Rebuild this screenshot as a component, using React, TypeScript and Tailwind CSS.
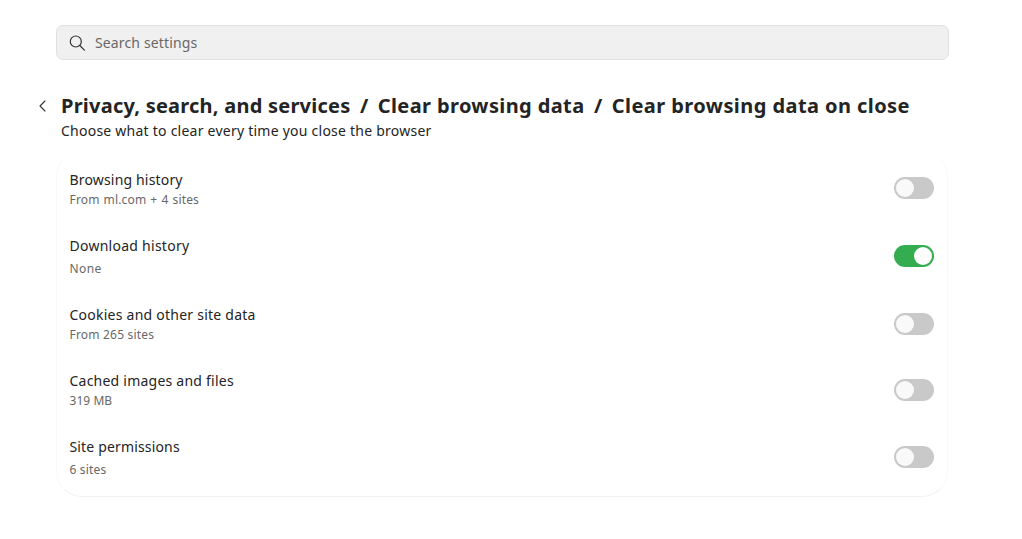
const crumbs = [
  { text: 'Privacy, search, and services', spacing: 'tracking-[0.23px]' },
  { text: 'Clear browsing data', spacing: 'tracking-[0.39px]' },
  { text: 'Clear browsing data on close', spacing: 'tracking-[0.43px]' },
];

const rows = [
  { title: 'Browsing history', titleSpacing: 'tracking-[0.17px]', detail: 'From ml.com + 4 sites', detailSpacing: 'tracking-[0.15px] [word-spacing:0.8px]', on: false, box: 'h-[66px]', gap: 'mt-0', toggle: 'mt-[7px]' },
  { title: 'Download history', titleSpacing: 'tracking-[0.26px]', detail: 'None', detailSpacing: 'tracking-[0.4px]', on: true, box: 'h-[69px]', gap: 'mt-[3px]', toggle: 'mt-[9px]' },
  { title: 'Cookies and other site data', titleSpacing: 'tracking-[0.24px]', detail: 'From 265 sites', detailSpacing: 'tracking-[0.2px]', on: false, box: 'h-[66px]', gap: 'mt-0', toggle: 'mt-[8px]' },
  { title: 'Cached images and files', titleSpacing: 'tracking-[0.23px]', detail: '319 MB', detailSpacing: 'tracking-[0.05px]', on: false, box: 'h-[66px]', gap: 'mt-0', toggle: 'mt-[8px]' },
  { title: 'Site permissions', titleSpacing: 'tracking-[0.16px]', detail: '6 sites', detailSpacing: 'tracking-[0.18px]', on: false, box: 'h-[60px]', gap: 'mt-[3px]', toggle: 'mt-[9px]' },
];

export default function App() {
  return (
    <main className="h-[539px] w-[1022px] overflow-hidden bg-white font-['Noto_Sans',sans-serif] text-[#242424]">
      <div className="ml-[56px] mt-[25px] flex h-[35px] w-[893px] items-center rounded-[7px] border border-[#e1e1e1] bg-[#f0f0f0] pl-[11px]">
        <svg width="18" height="18" viewBox="0 0 18 18" fill="none" stroke="#333333" strokeWidth="1.2" strokeLinecap="round">
          <circle cx="7.8" cy="7.5" r="5.5" />
          <path d="M11.8 11.5L16.4 16.1" />
        </svg>
        <span className="ml-[9px] whitespace-nowrap text-[14px] leading-5 tracking-[0.14px] text-[#686868]">Search settings</span>
      </div>
      <header className="mt-[32px] pl-[38px]">
        <div className="flex h-[28px] items-center">
          <svg className="mr-[14px] shrink-0" width="9" height="12" viewBox="0 0 9 12" fill="none" stroke="#333333" strokeWidth="1.1" strokeLinecap="round" strokeLinejoin="round">
            <path d="M7 1L2 6l5 5" />
          </svg>
          <h1 className="flex whitespace-nowrap text-[20px] font-bold leading-7">
            {crumbs.map((c, i) => (
              <span key={c.text} className="flex">
                {i > 0 && <span className="w-[27.3px] text-center">/</span>}
                <span className={c.spacing}>{c.text}</span>
              </span>
            ))}
          </h1>
        </div>
        <p className="ml-[23px] mt-[1px] text-[14px] leading-5 tracking-[0.24px]">Choose what to clear every time you close the browser</p>
      </header>
      <section className="ml-[56px] mt-[10px] h-[346px] w-[892px] rounded-[26px] border border-x-[#f9f9f9] border-b-[#f2f2f2] border-t-[#fefefe] pl-[12.5px] pr-[13px] pt-[18px]">
        {rows.map((r) => (
          <div key={r.title} className={`flex items-start justify-between ${r.box}`}>
            <div className="whitespace-nowrap">
              <div className={`text-[14px] leading-5 ${r.titleSpacing}`}>{r.title}</div>
              <div className={`text-[12px] leading-5 text-[#686868] ${r.detailSpacing} ${r.gap}`}>{r.detail}</div>
            </div>
            <div className={`flex h-[22px] w-[40px] items-center rounded-full px-[2px] ${r.toggle} ${r.on ? 'justify-end bg-[#34ad50]' : 'bg-[#c9c9c9]'}`}>
              <div className={`size-[18px] rounded-full ${r.on ? 'bg-white' : 'bg-[#f9f9f9]'}`} />
            </div>
          </div>
        ))}
      </section>
    </main>
  );
}
